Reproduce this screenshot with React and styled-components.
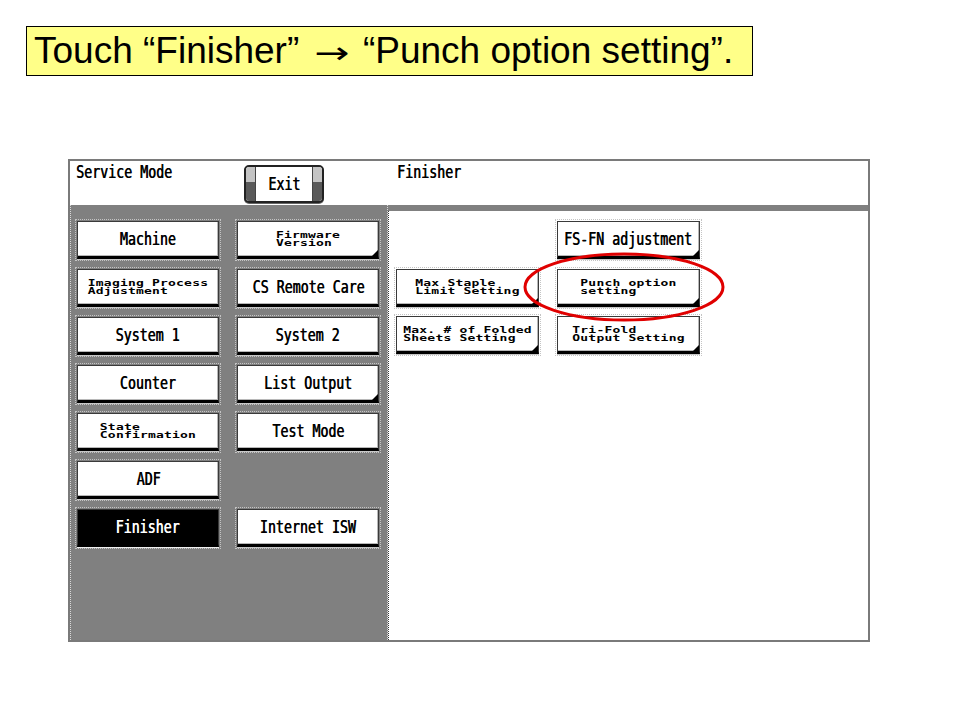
import React from "react";
import styled, { createGlobalStyle } from "styled-components";

const Global = createGlobalStyle`
  html, body { margin: 0; padding: 0; background: #fff; }
  body { width: 960px; height: 720px; overflow: hidden; }
`;

const Page = styled.div`
  padding: 26px 0 0 26px;
`;

const Banner = styled.div`
  box-sizing: border-box;
  width: 727px;
  height: 50px;
  background: #ffff88;
  border: 1px solid #000;
  padding-left: 7px;
  font-family: "Liberation Sans", Arial, sans-serif;
  font-size: 37px;
  line-height: 48px;
  color: #000;
  white-space: nowrap;
  overflow: hidden;
`;

const Arrow = styled.span`
  display: inline-block;
  font-family: "DejaVu Sans", sans-serif;
  font-size: 30px;
  margin: 0 9px 0 9px;
  transform: scaleX(1.4);
`;

const Screen = styled.div`
  position: relative;
  box-sizing: border-box;
  margin: 83px 0 0 42px;
  width: 802px;
  height: 483px;
  border: 2px solid #7a7a7a;
  display: flex;
  flex-direction: column;
  font-family: "DejaVu Sans Mono", "Liberation Mono", monospace;
  color: #000;
`;

const Header = styled.div`
  height: 44px;
  background: #fff;
  display: grid;
  grid-template-columns: 174px 144px 1fr;
`;

const HeaderLabel = styled.div`
  padding: ${(p) => (p.$right ? "3px 0 0 9px" : "3px 0 0 6px")};
  font-size: 16px;
  line-height: 18px;
  white-space: nowrap;
`;

const Squeeze = styled.span`
  display: inline-block;
  transform: scale(0.83, 1.05);
  transform-origin: ${(p) => (p.$origin || "center")};
  white-space: nowrap;
  text-shadow: 0.6px 0 0 currentColor;
`;

const ExitButton = styled.div`
  box-sizing: border-box;
  margin-top: 4px;
  width: 80px;
  height: 38px;
  border: 2px solid #222;
  border-radius: 5px;
  display: grid;
  grid-template-columns: 10px 1fr 10px;
  background: #fff;
  overflow: hidden;
  box-shadow: 0 1px 0 #666;
`;

const ExitSide = styled.div`
  background: linear-gradient(#c4c4c4 0 45%, #5a5a5a 45% 100%);
  border-${(p) => (p.$right ? "left" : "right")}: 1px solid #444;
`;

const ExitFace = styled.div`
  display: flex;
  align-items: center;
  justify-content: center;
  font-size: 16px;
  padding-top: 1px;
`;

const Body = styled.div`
  flex: 1;
  display: grid;
  grid-template-columns: 318px 1fr;
  background: #808080;
`;

const LeftPanel = styled.div`
  box-sizing: border-box;
  border-left: 1px dotted #d8d8d8;
  border-right: 1px dotted #d8d8d8;
  padding: 16px 0 0 6px;
  display: grid;
  grid-template-columns: 142px 142px;
  grid-auto-rows: 38px;
  column-gap: 18px;
  row-gap: 10px;
  align-content: start;
`;

const RightPanel = styled.div`
  margin-top: 6px;
  background: #fff;
  border-left: 1px dotted #333;
  padding: 10px 0 0 7px;
  display: grid;
  grid-template-columns: 143px 143px;
  grid-auto-rows: 38px;
  column-gap: 18px;
  row-gap: 9.5px;
  align-content: start;
`;

const Key = styled.div`
  position: relative;
  box-sizing: border-box;
  grid-column: ${(p) => p.$col || "auto"};
  grid-row: ${(p) => p.$row || "auto"};
  background: ${(p) => (p.$active ? "#000" : "#fff")};
  color: ${(p) => (p.$active ? "#fff" : "#000")};
  border: 1px solid #3a3a3a;
  border-bottom: 3px solid #000;
  box-shadow: inset -1px -1px 0 ${(p) => (p.$active ? "#000" : "#b8b8b8")},
    0 1px 0 ${(p) => (p.$active ? "#f0f0f0" : "#c8c8c8")};
  outline: 1px dotted #c4c4c4;
  outline-offset: 1px;
  display: flex;
  align-items: center;
  justify-content: center;
  font-size: 16px;
  line-height: 18px;
  padding-top: 1px;

  &::after {
    content: "";
    display: ${(p) => (p.$corner ? "block" : "none")};
    position: absolute;
    right: 0;
    bottom: 0;
    width: 0;
    height: 0;
    border-left: 6px solid transparent;
    border-bottom: 6px solid #000;
  }
`;

const SmallText = styled.div`
  font-size: 13px;
  line-height: 12.5px;
  font-weight: bold;
  text-align: left;
  white-space: pre;
  transform: scaleY(0.66);
  letter-spacing: 0.2px;
`;

const Highlight = styled.svg`
  position: absolute;
  left: 449px;
  top: 89px;
  overflow: visible;
  pointer-events: none;
`;

const Label = ({ text, small }) =>
  small ? <SmallText>{text}</SmallText> : <Squeeze>{text}</Squeeze>;

const leftKeys = [
  { t: "Machine", c: 1 },
  { t: "Firmware\nVersion", s: true, c: 2, k: true },
  { t: "Imaging Process\nAdjustment", s: true, c: 1 },
  { t: "CS Remote Care", c: 2 },
  { t: "System 1", c: 1 },
  { t: "System 2", c: 2 },
  { t: "Counter", c: 1 },
  { t: "List Output", c: 2, k: true },
  { t: "State\nConfirmation", s: true, c: 1 },
  { t: "Test Mode", c: 2 },
  { t: "ADF", c: 1 },
  { t: "Finisher", c: 1, a: true, r: 7 },
  { t: "Internet ISW", c: 2, r: 7 },
];

const rightKeys = [
  { t: "FS-FN adjustment", c: 2, r: 1, k: true },
  { t: "Max Staple\nLimit Setting", s: true, c: 1, r: 2, k: true },
  { t: "Punch option\nsetting", s: true, c: 2, r: 2, k: true },
  { t: "Max. # of Folded\nSheets Setting", s: true, c: 1, r: 3, k: true },
  { t: "Tri-Fold\nOutput Setting", s: true, c: 2, r: 3, k: true },
];

export default function App() {
  return (
    <Page>
      <Global />
      <Banner>
        Touch “Finisher” <Arrow>→</Arrow> “Punch option setting”.
      </Banner>
      <Screen>
        <Header>
          <HeaderLabel>
            <Squeeze $origin="left">Service Mode</Squeeze>
          </HeaderLabel>
          <div>
            <ExitButton>
              <ExitSide />
              <ExitFace>
                <Squeeze>Exit</Squeeze>
              </ExitFace>
              <ExitSide $right />
            </ExitButton>
          </div>
          <HeaderLabel $right>
            <Squeeze $origin="left">Finisher</Squeeze>
          </HeaderLabel>
        </Header>
        <Body>
          <LeftPanel>
            {leftKeys.map((k) => (
              <Key key={k.t} $col={k.c} $row={k.r} $active={k.a} $corner={k.k}>
                <Label text={k.t} small={k.s} />
              </Key>
            ))}
          </LeftPanel>
          <RightPanel>
            {rightKeys.map((k) => (
              <Key key={k.t} $col={k.c} $row={k.r} $corner={k.k}>
                <Label text={k.t} small={k.s} />
              </Key>
            ))}
          </RightPanel>
        </Body>
        <Highlight width="210" height="74" viewBox="0 0 210 74">
          <ellipse cx="105" cy="37" rx="99" ry="33" fill="none" stroke="#e00000" strokeWidth="3" />
        </Highlight>
      </Screen>
    </Page>
  );
}
